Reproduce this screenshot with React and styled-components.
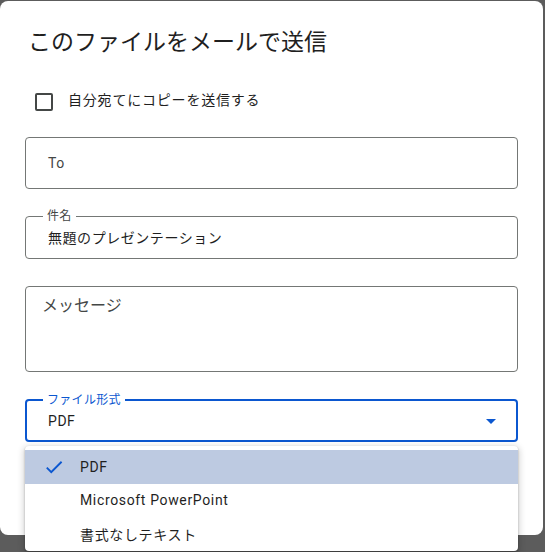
import React from "react";
import styled, { createGlobalStyle } from "styled-components";

const Global = createGlobalStyle`
  html, body { margin: 0; padding: 0; background: #5c5c5c; overflow: hidden; }
  body { width: 545px; height: 552px; font-family: Roboto, "Noto Sans CJK JP", sans-serif; }
  * { box-sizing: border-box; }
`;

const Dialog = styled.div`
  position: relative;
  margin-top: 1px;
  width: 543px;
  height: 534px;
  background: #fff;
  border-radius: 8px;
  padding: 28px 25px 0 25px;
  display: flex;
  flex-direction: column;
`;

const Title = styled.h1`
  margin: 0 0 0 3px;
  font-size: 23px;
  line-height: 28px;
  font-weight: 400;
  color: #1f1f1f;
  font-family: Roboto, "Noto Sans CJK JP", sans-serif;
`;

const CheckRow = styled.label`
  display: flex;
  align-items: center;
  margin: 36px 0 0 10px;
  height: 18px;
`;

const Box = styled.span`
  width: 18px;
  height: 18px;
  border: 2px solid #444746;
  border-radius: 2px;
  flex: none;
`;

const CheckLabel = styled.span`
  margin-left: 15px;
  font-size: 14px;
  letter-spacing: 0.8px;
  color: #1f1f1f;
  line-height: 18px;
  position: relative;
  top: -2px;
`;

const Fields = styled.div`
  display: flex;
  flex-direction: column;
  gap: 27px;
  margin-top: 26px;
`;

const Field = styled.div`
  position: relative;
  height: ${(p) => p.$h}px;
  border: ${(p) => (p.$focus ? "2px solid #0b57d0" : "1px solid #747775")};
  border-radius: 4px;
  display: flex;
  align-items: ${(p) => (p.$top ? "flex-start" : "center")};
  padding: ${(p) => (p.$top ? "9px 16px" : p.$focus ? "0 13px 0 21px" : "0 22px 0 22px")};
`;

const Float = styled.span`
  position: absolute;
  left: ${(p) => (p.$focus ? 16 : 17)}px;
  top: -9px;
  padding: 0 4px;
  background: #fff;
  font-size: 12px;
  line-height: 16px;
  letter-spacing: 0.3px;
  color: ${(p) => (p.$focus ? "#0b57d0" : "#444746")};
`;

const Value = styled.span`
  font-size: 14px;
  line-height: 20px;
  letter-spacing: 0.55px;
  color: ${(p) => (p.$ph ? "#444746" : "#1f1f1f")};
  flex: 1;
`;

const Placeholder = styled.span`
  font-size: 16px;
  line-height: 22px;
  color: #444746;
  position: relative;
  top: -1px;
`;

const Arrow = styled.svg`
  width: 24px;
  height: 24px;
  flex: none;
  fill: #0b57d0;
`;

const Menu = styled.div`
  position: absolute;
  left: -2px;
  right: -2px;
  top: calc(100% + 6px);
  background: #fff;
  border-radius: 4px;
  padding-top: 4px;
  box-shadow: 0 2px 6px 2px rgba(0, 0, 0, 0.15), 0 1px 2px rgba(0, 0, 0, 0.3);
  z-index: 2;
`;

const Item = styled.div`
  height: 33.5px;
  display: flex;
  align-items: center;
  padding-left: 18px;
  background: ${(p) => (p.$sel ? "#bdcae1" : "transparent")};
  font-size: 14px;
  letter-spacing: 0.65px;
  color: #1f1f1f;
`;

const CheckSlot = styled.span`
  width: 37px;
  display: flex;
  align-items: center;
`;

const CheckIcon = styled.svg`
  width: 22px;
  height: 22px;
  fill: #0b57d0;
`;

export default function App() {
  return (
    <>
      <Global />
      <Dialog>
        <Title>このファイルをメールで送信</Title>
        <CheckRow>
          <Box />
          <CheckLabel>自分宛てにコピーを送信する</CheckLabel>
        </CheckRow>
        <Fields>
          <Field $h={52}>
            <Value $ph>To</Value>
          </Field>
          <Field $h={43}>
            <Float>件名</Float>
            <Value>無題のプレゼンテーション</Value>
          </Field>
          <Field $h={86} $top>
            <Placeholder>メッセージ</Placeholder>
          </Field>
          <Field $h={43} $focus>
            <Float $focus>ファイル形式</Float>
            <Value>PDF</Value>
            <Arrow viewBox="0 0 24 24">
              <path d="M7 10l5 5 5-5z" />
            </Arrow>
            <Menu>
              <Item $sel>
                <CheckSlot>
                  <CheckIcon viewBox="0 0 24 24">
                    <path d="M9 16.17L4.83 12l-1.42 1.41L9 19 21 7l-1.41-1.41z" />
                  </CheckIcon>
                </CheckSlot>
                PDF
              </Item>
              <Item>
                <CheckSlot />
                Microsoft PowerPoint
              </Item>
              <Item>
                <CheckSlot />
                書式なしテキスト
              </Item>
            </Menu>
          </Field>
        </Fields>
      </Dialog>
    </>
  );
}
